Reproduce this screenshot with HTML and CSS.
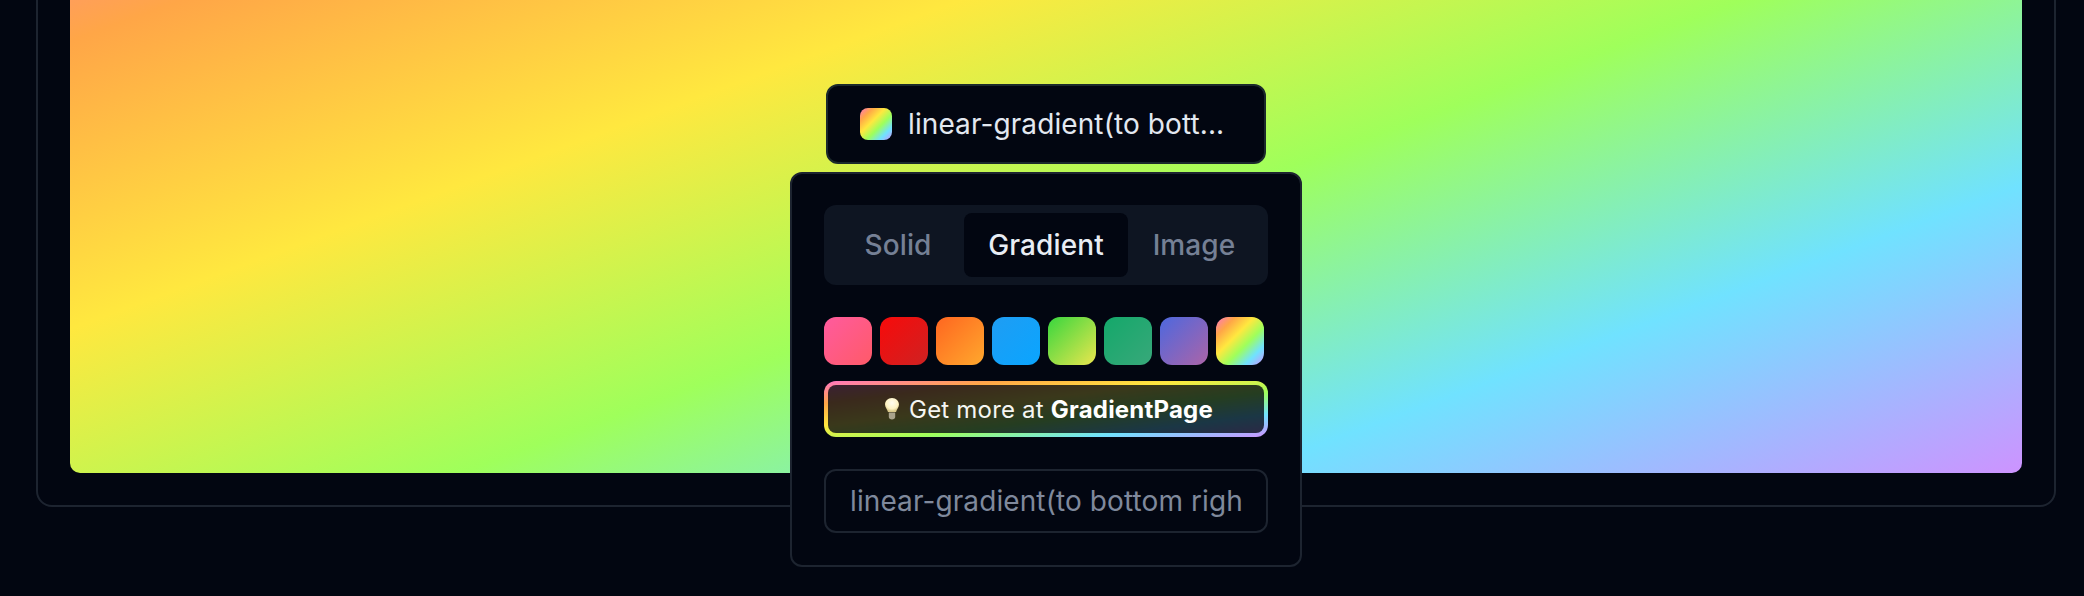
FILE: index.html
```html
<!DOCTYPE html>
<html lang="en">
<head>
    <meta charset="UTF-8">
    <meta name="viewport" content="width=device-width, initial-scale=1.0">
    <title>Gradient Picker</title>
    <link rel="stylesheet" href="styles.css">
</head>
<body>

    <div class="preview-card">
        <div class="preview"></div>

        <div class="picker">
            <button class="picker-btn">
                <span class="swatch-small"></span>
                <span class="picker-value">linear-gradient(to bott...</span>
            </button>

            <div class="popover">
                <div class="tabs">
                    <div class="tab">Solid</div>
                    <div class="tab active">Gradient</div>
                    <div class="tab">Image</div>
                </div>

                <div class="swatches">
                    <div class="swatch pink"></div>
                    <div class="swatch red"></div>
                    <div class="swatch orange"></div>
                    <div class="swatch blue"></div>
                    <div class="swatch green"></div>
                    <div class="swatch teal"></div>
                    <div class="swatch violet"></div>
                    <div class="swatch rainbow"></div>
                </div>

                <div class="promo">
                    <div class="promo-inner">
                        <svg class="bulb" viewBox="0 0 16 24" width="18" height="24">
                            <defs>
                                <radialGradient id="glass" cx="50%" cy="35%" r="60%">
                                    <stop offset="0" stop-color="#fffdf0"/>
                                    <stop offset="0.7" stop-color="#fdf3c4"/>
                                    <stop offset="1" stop-color="#d9c98a"/>
                                </radialGradient>
                            </defs>
                            <path d="M8 1C3.800 1 1 4 1 7.600c0 3 2.200 4.600 3 7.400h8c.8-2.800 3-4.400 3-7.400C15 4 12.200 1 8 1z" fill="url(#glass)"/>
                            <path d="M4.800 15.500h6.400v4.500c0 1.500-1.400 2.500-3.200 2.500s-3.200-1-3.200-2.500z" fill="#a9a38c"/>
                        </svg>
                        <span>Get more at <b>GradientPage</b></span>
                    </div>
                </div>

                <input class="value-input" type="text" value="linear-gradient(to bottom righ">
            </div>
        </div>
    </div>

</body>
</html>
```

FILE: styles.css
```css
body {
    margin: 0;
    height: 596px;
    overflow: hidden;
    background-color: #020611;
    font-family: "Inter", "Liberation Sans", sans-serif;
}

.preview-card {
    position: relative;
    margin: -281px 28px 0 36px;
    padding: 32px;
    height: 720px;
    border: 2px solid #1d2430;
    border-radius: 16px;
    display: flex;
}

.preview {
    flex-grow: 1;
    border-radius: 10px;
    background: linear-gradient(to bottom right, #ff75c3, #ffa647, #ffe83f, #9fff5b, #70e2ff, #cd93ff);
}

.picker {
    position: absolute;
    left: 752px;
    bottom: -62px;
    width: 512px;
    display: flex;
    flex-direction: column;
    align-items: center;
    gap: 8px;
}

.picker-btn {
    width: 440px;
    height: 80px;
    box-sizing: border-box;
    padding: 0 32px;
    display: flex;
    align-items: center;
    gap: 16px;
    background-color: #020611;
    border: 2px solid #1b2a2c;
    border-radius: 12px;
    font-family: inherit;
}

.swatch-small {
    flex-shrink: 0;
    width: 32px;
    height: 32px;
    border-radius: 8px;
    background: linear-gradient(to bottom right, #ff75c3, #ffa647, #ffe83f, #9fff5b, #70e2ff, #cd93ff);
}

.picker-value {
    font-size: 28px;
    letter-spacing: 0.1px;
    color: #e2e8f0;
    white-space: nowrap;
}

.popover {
    width: 100%;
    box-sizing: border-box;
    padding: 31px 32px 32px;
    background-color: #020611;
    border: 2px solid #1d2430;
    border-radius: 12px;
}

.tabs {
    display: flex;
    height: 80px;
    box-sizing: border-box;
    padding: 8px;
    background-color: #0e1522;
    border-radius: 12px;
    margin-bottom: 32px;
}

.tab {
    flex: 1;
    display: flex;
    align-items: center;
    justify-content: center;
    border-radius: 8px;
    font-size: 28px;
    font-weight: 500;
    letter-spacing: 0.1px;
    color: #758095;
}

.tab.active {
    flex: none;
    width: 164px;
    background-color: #020611;
    color: #e8edf4;
}

.swatches {
    display: flex;
    gap: 8px;
    margin-bottom: 16px;
}

.swatch {
    width: 48px;
    height: 48px;
    border-radius: 12px;
}

.pink { background: linear-gradient(to bottom right, #ff5b9e, #ff5a68); }
.red { background: linear-gradient(to bottom right, #f80a0a, #ce2222); }
.orange { background: linear-gradient(to bottom right, #ff6620, #ffa82d); }
.blue { background: linear-gradient(to bottom right, #1f9df3, #0aa5ff); }
.green { background: linear-gradient(to bottom right, #38d63e, #eae64e); }
.teal { background: linear-gradient(to bottom right, #14a86a, #38a87a); }
.violet { background: linear-gradient(to bottom right, #4d68de, #ac64a8); }
.rainbow { background: linear-gradient(to bottom right, #ff75c3, #ffa647, #ffe83f, #9fff5b, #70e2ff, #cd93ff); }

.promo {
    padding: 4px;
    border-radius: 12px;
    background: linear-gradient(to bottom right, #ff75c3, #ffa647, #ffe83f, #9fff5b, #70e2ff, #cd93ff);
    margin-bottom: 32px;
}

.promo-inner {
    height: 48px;
    display: flex;
    align-items: center;
    justify-content: center;
    gap: 8px;
    padding-left: 4px;
    border-radius: 8px;
    background: rgba(2, 6, 17, 0.78);
    font-size: 24px;
    letter-spacing: 0.2px;
    color: #f5f6f2;
}

.promo-inner b {
    font-weight: 700;
    color: #fff;
}

.value-input {
    display: block;
    width: 100%;
    height: 64px;
    box-sizing: border-box;
    padding: 0 16px 0 24px;
    background: none;
    border: 2px solid #1d2430;
    border-radius: 12px;
    outline: none;
    font-family: inherit;
    font-size: 28px;
    letter-spacing: 0.1px;
    color: #7f899c;
}
```
